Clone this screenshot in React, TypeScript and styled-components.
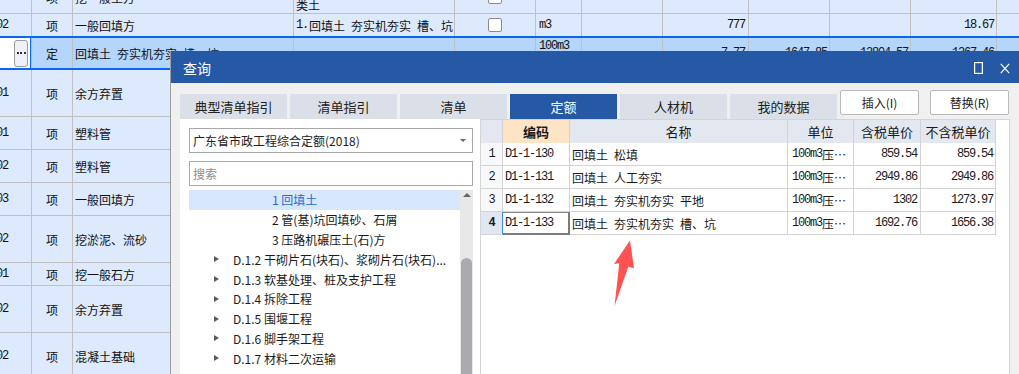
import styled, { createGlobalStyle, css } from 'styled-components';

const GlobalStyle = createGlobalStyle`
  html, body {
    margin: 0;
    padding: 0;
  }
  body {
    width: 1019px;
    height: 374px;
    overflow: hidden;
    background: #dde9fc;
    font-family: "Noto Sans CJK SC", "Noto Sans", sans-serif;
  }
`;

const Page = styled.div`
  position: relative;
  width: 1019px;
  height: 374px;
  overflow: hidden;
  background: #dde9fc;
`;

/* ---------- background sheet ---------- */

const Sheet = styled.div`
  margin-top: -19px;
`;

const SheetRow = styled.div<{ $h: number; $sel?: boolean; $noLine?: boolean }>`
  display: grid;
  grid-template-columns: 31px 40px 220px 160px 80px 45px 80px 85px 80px 80px 85px 1fr;
  column-gap: 1px;
  height: ${(p) => p.$h}px;
  background: #c0c0c0;
  border-bottom: 1px solid #c0c0c0;
  ${(p) => p.$noLine && css`border-bottom: none;`}
  ${(p) =>
    p.$sel &&
    css`
      border-top: 2px solid #0a66f5;
      border-bottom: 2px solid #0a66f5;
    `}
`;

const SCell = styled.div<{
  $align?: 'left' | 'center' | 'right';
  $top?: boolean;
  $sel?: boolean;
  $white?: boolean;
}>`
  display: flex;
  align-items: ${(p) => (p.$top ? 'flex-start' : 'center')};
  justify-content: ${(p) =>
    p.$align === 'center' ? 'center' : p.$align === 'right' ? 'flex-end' : 'flex-start'};
  padding: 0 2px;
  background: ${(p) => (p.$white ? '#ffffff' : p.$sel ? '#b4d5fc' : '#dde9fc')};
  color: #111;
  font-size: 12px;
  white-space: pre;
  overflow: hidden;
`;

const CodeTail = styled(SCell)`
  justify-content: flex-end;
  padding-right: 23px;
`;

const Multi = styled.div`
  padding-top: 1px;
  line-height: 15px;
  white-space: pre;
`;

const Mono = styled.span<{ $bold?: boolean; $gapAfter?: number }>`
  font-family: "Liberation Mono", "Noto Sans CJK SC", monospace;
  font-size: 12px;
  letter-spacing: -1.2px;
  font-weight: ${(p) => (p.$bold ? 700 : 400)};
  margin-right: ${(p) => p.$gapAfter ?? 0}px;
`;

const CheckBox = styled.div`
  width: 14px;
  height: 14px;
  box-sizing: border-box;
  border: 1px solid #8c8c8c;
  border-radius: 2px;
  background: #fff;
`;

const EditCell = styled(SCell)`
  justify-content: flex-end;
  padding: 0 3px 0 0;
  box-shadow: inset -1px 0 0 #0a66f5;
`;

const EllipsisButton = styled.div`
  width: 14px;
  height: 27px;
  box-sizing: border-box;
  border: 1px solid #9a9a9a;
  border-radius: 3px;
  background: #eef1f8;
  display: flex;
  align-items: center;
  justify-content: center;
  gap: 1.5px;
`;

const Dot = styled.span`
  width: 2px;
  height: 2px;
  background: #333;
`;

/* ---------- dialog ---------- */

const Dialog = styled.div`
  position: absolute;
  left: 170px;
  top: 51px;
  width: 849px;
  height: 330px;
  box-sizing: border-box;
  border-left: 1px solid #9c9c9c;
  background: #f0f0f0;
  display: flex;
  flex-direction: column;
`;

const TitleBar = styled.div`
  height: 32px;
  flex: none;
  display: flex;
  align-items: center;
  padding: 2px 9px 0 12px;
  box-sizing: border-box;
  background: #2559a5;
  color: #fff;
  font-size: 14px;
`;

const WinButtons = styled.div`
  margin-left: auto;
  display: flex;
  align-items: center;
  gap: 17px;
`;

const Body = styled.div`
  flex: 1;
  min-height: 0;
  display: flex;
  flex-direction: column;
  padding: 7px 0 0 9px;
`;

const TabBar = styled.div`
  height: 29px;
  flex: none;
  display: flex;
  gap: 3px;
`;

const Tab = styled.div<{ $active?: boolean }>`
  align-self: flex-end;
  width: 107px;
  height: 25px;
  display: flex;
  align-items: center;
  justify-content: center;
  font-size: 13px;
  background: ${(p) => (p.$active ? '#2559a5' : '#dadfe8')};
  color: ${(p) => (p.$active ? '#ffffff' : '#222222')};
`;

const ActionButton = styled.div<{ $gap?: number }>`
  align-self: flex-start;
  width: 79px;
  height: 25px;
  box-sizing: border-box;
  margin-left: ${(p) => p.$gap ?? 0}px;
  border: 1px solid #b9b9b9;
  border-radius: 2px;
  background: #fff;
  color: #222;
  font-size: 12px;
  display: flex;
  align-items: center;
  justify-content: center;
`;

const Content = styled.div`
  flex: 1;
  min-height: 0;
  display: flex;
`;

const LeftPanel = styled.div`
  width: 300px;
  flex: none;
  box-sizing: border-box;
  padding: 9px 7px 0 9px;
  background: #fff;
  display: flex;
  flex-direction: column;
`;

const InputBox = styled.div<{ $muted?: boolean; $mt?: number }>`
  height: 25px;
  flex: none;
  box-sizing: border-box;
  margin-top: ${(p) => p.$mt ?? 0}px;
  padding: 0 3px;
  border: 1px solid #a8a8a8;
  display: flex;
  align-items: center;
  font-size: 12px;
  color: ${(p) => (p.$muted ? '#8c8c8c' : '#222')};
`;

const DropArrow = styled.span`
  margin-left: auto;
  margin-right: 3px;
  width: 0;
  height: 0;
  border-left: 3px solid transparent;
  border-right: 3px solid transparent;
  border-top: 3px solid #666;
`;

const TreeWrap = styled.div`
  flex: 1;
  min-height: 0;
  margin-top: 4px;
  display: flex;
`;

const TreeList = styled.div`
  flex: 1;
  min-width: 0;
`;

const TreeItem = styled.div<{ $level: number; $active?: boolean }>`
  height: 19.8px;
  display: flex;
  align-items: center;
  padding-left: ${(p) => (p.$level === 2 ? 83 : 25)}px;
  background: ${(p) => (p.$active ? '#d7e7fc' : 'transparent')};
  color: ${(p) => (p.$active ? '#1f6fd8' : '#1a1a1a')};
  font-size: 12px;
  white-space: pre;
  overflow: hidden;
`;

const Caret = styled.span`
  flex: none;
  width: 0;
  height: 0;
  margin-right: 14px;
  border-top: 3.5px solid transparent;
  border-bottom: 3.5px solid transparent;
  border-left: 5px solid #5a5a5a;
`;

const ScrollTrack = styled.div`
  width: 13px;
  flex: none;
  background: #e8e8e8;
  display: flex;
  flex-direction: column;
  align-items: center;
`;

const ScrollUp = styled.span`
  margin-top: 3px;
  width: 0;
  height: 0;
  border-left: 4px solid transparent;
  border-right: 4px solid transparent;
  border-bottom: 4px solid #666;
`;

const ScrollThumb = styled.div`
  margin-top: 61px;
  width: 11px;
  flex: 1;
  border-radius: 6px 6px 0 0;
  background: #a9abae;
`;

const RightPanel = styled.div`
  width: 530px;
  flex: none;
  box-sizing: border-box;
  border: 1px solid #d4d4d4;
  border-bottom: none;
  background: #fff;
`;

const Table = styled.div`
  display: grid;
  grid-template-columns: 22px 67px 218px 66px 67px 75px;
  grid-auto-rows: 23px;
  width: fit-content;
`;

const TCell = styled.div<{
  $head?: boolean;
  $align?: 'left' | 'center' | 'right';
  $bg?: string;
  $current?: boolean;
  $pad?: number;
}>`
  box-sizing: border-box;
  display: flex;
  align-items: center;
  justify-content: ${(p) =>
    p.$align === 'center' ? 'center' : p.$align === 'right' ? 'flex-end' : 'flex-start'};
  padding: 0 ${(p) => p.$pad ?? 2}px;
  border-right: 1px solid #d3d3d3;
  border-bottom: 1px solid #d3d3d3;
  background: ${(p) => p.$bg ?? (p.$head ? '#e3e8f0' : '#ffffff')};
  color: #1a1a1a;
  font-size: ${(p) => (p.$head ? 13 : 12)}px;
  white-space: pre;
  overflow: hidden;
  ${(p) => p.$head && css`height: 24px;`}
  ${(p) =>
    p.$current &&
    css`
      border-right: 2px solid #7c7c7c;
      border-bottom: 2px solid #7c7c7c;
      box-shadow: inset 0 1px 0 #8a8a8a;
    `}
`;

const RowNum = styled(TCell)<{ $on?: boolean }>`
  justify-content: center;
  background: ${(p) => (p.$on ? '#e1e7f0' : '#f7f8fa')};
  ${(p) => p.$on && css`border-right-color: #3a8ce8;`}
`;

const Arrow = styled.svg`
  position: absolute;
  left: 610px;
  top: 236px;
`;

const lowerRows = [
  { code: '040103002001', name: '余方弃置', h: 46 },
  { code: '040801004001', name: '塑料管', h: 32 },
  { code: '040801004002', name: '塑料管', h: 32 },
  { code: '040103001003', name: '一般回填方', h: 32 },
  { code: '040101005002', name: '挖淤泥、流砂', h: 46 },
  { code: '040102001001', name: '挖一般石方', h: 22 },
  { code: '040103002002', name: '余方弃置', h: 46 },
  { code: '040601001002', name: '混凝土基础', h: 46 },
];

const tabs = ['典型清单指引', '清单指引', '清单', '定额', '人材机', '我的数据'];

const tree: { level: number; text: string; active?: boolean }[] = [
  { level: 2, text: '1 回填土', active: true },
  { level: 2, text: '2 管(基)坑回填砂、石屑' },
  { level: 2, text: '3 压路机碾压土(石)方' },
  { level: 1, text: 'D.1.2 干砌片石(块石)、浆砌片石(块石)...' },
  { level: 1, text: 'D.1.3 软基处理、桩及支护工程' },
  { level: 1, text: 'D.1.4 拆除工程' },
  { level: 1, text: 'D.1.5 围堰工程' },
  { level: 1, text: 'D.1.6 脚手架工程' },
  { level: 1, text: 'D.1.7 材料二次运输' },
];

const quotas = [
  { code: 'D1-1-130', name: '回填土\u2002松填', tax: '859.54', net: '859.54' },
  { code: 'D1-1-131', name: '回填土\u2002人工夯实', tax: '2949.86', net: '2949.86' },
  { code: 'D1-1-132', name: '回填土\u2002夯实机夯实\u2002平地', tax: '1302', net: '1273.97' },
  { code: 'D1-1-133', name: '回填土\u2002夯实机夯实\u2002槽、坑', tax: '1692.76', net: '1656.38' },
];

const Empty = ({ n }: { n: number }) => (
  <>
    {Array.from({ length: n }).map((_, i) => (
      <SCell key={i} />
    ))}
  </>
);

const App = () => {
  return (
    <Page>
      <GlobalStyle />
      <Sheet>
        <SheetRow $h={32}>
          <SCell />
          <SCell $align="center">项</SCell>
          <SCell>挖一般土方</SCell>
          <SCell $top>
            <Multi>{'1.土壤类别:一、二、三\n类土'}</Multi>
          </SCell>
          <SCell $align="center">
            <CheckBox />
          </SCell>
          <Empty n={7} />
        </SheetRow>
        <SheetRow $h={22} $noLine>
          <CodeTail>
            <Mono>040103001002</Mono>
          </CodeTail>
          <SCell $align="center">项</SCell>
          <SCell>一般回填方</SCell>
          <SCell>
            <Mono $gapAfter={1}>1.</Mono>回填土{'\u2002'}夯实机夯实{'\u2002'}槽、坑
          </SCell>
          <SCell $align="center">
            <CheckBox />
          </SCell>
          <SCell $align="left" style={{ paddingLeft: 3 }}>
            <Mono>m3</Mono>
          </SCell>
          <SCell />
          <SCell $align="right" style={{ paddingRight: 3 }}>
            <Mono>777</Mono>
          </SCell>
          <SCell />
          <SCell />
          <SCell $align="right">
            <Mono>18.67</Mono>
          </SCell>
          <SCell />
        </SheetRow>
        <SheetRow $h={30} $sel>
          <EditCell $white>
            <EllipsisButton>
              <Dot />
              <Dot />
              <Dot />
            </EllipsisButton>
          </EditCell>
          <SCell $sel $align="center">定</SCell>
          <SCell $sel>回填土{'\u2002'}夯实机夯实{'\u2002'}槽、坑</SCell>
          <SCell $sel />
          <SCell $sel />
          <SCell $sel $top style={{ paddingLeft: 3, paddingTop: 1 }}>
            <Mono>100m3</Mono>
          </SCell>
          <SCell $sel />
          <SCell $sel $align="right" style={{ paddingRight: 3 }}>
            <Mono>7.77</Mono>
          </SCell>
          <SCell $sel $align="right">
            <Mono>1647.85</Mono>
          </SCell>
          <SCell $sel $align="right">
            <Mono>12804.57</Mono>
          </SCell>
          <SCell $sel $align="right">
            <Mono>1267.46</Mono>
          </SCell>
          <SCell $sel />
        </SheetRow>
        {lowerRows.map((r, i) => (
          <SheetRow key={i} $h={r.h}>
            <CodeTail>
              <Mono>{r.code}</Mono>
            </CodeTail>
            <SCell $align="center">项</SCell>
            <SCell>{r.name}</SCell>
            <Empty n={9} />
          </SheetRow>
        ))}
      </Sheet>

      <Dialog>
        <TitleBar>
          查询
          <WinButtons>
            <svg width="9" height="12" viewBox="0 0 9 12">
              <rect x="0.6" y="0.6" width="7.8" height="10.8" fill="none" stroke="#fff" strokeWidth="1.2" />
            </svg>
            <svg width="10" height="11" viewBox="0 0 10 11">
              <path d="M0.8 0.8 L9.2 10.2 M9.2 0.8 L0.8 10.2" stroke="#fff" strokeWidth="1.2" fill="none" />
            </svg>
          </WinButtons>
        </TitleBar>
        <Body>
          <TabBar>
            {tabs.map((t) => (
              <Tab key={t} $active={t === '定额'}>
                {t}
              </Tab>
            ))}
            <ActionButton>插入(I)</ActionButton>
            <ActionButton $gap={8}>替换(R)</ActionButton>
          </TabBar>
          <Content>
            <LeftPanel>
              <InputBox>
                广东省市政工程综合定额(2018)
                <DropArrow />
              </InputBox>
              <InputBox $muted $mt={8}>
                搜索
              </InputBox>
              <TreeWrap>
                <TreeList>
                  {tree.map((n) => (
                    <TreeItem key={n.text} $level={n.level} $active={n.active}>
                      {n.level === 1 && <Caret />}
                      {n.text}
                    </TreeItem>
                  ))}
                </TreeList>
                <ScrollTrack>
                  <ScrollUp />
                  <ScrollThumb />
                </ScrollTrack>
              </TreeWrap>
            </LeftPanel>
            <RightPanel>
              <Table>
                <TCell $head />
                <TCell $head $align="center" $bg="#fde4c4" style={{ fontWeight: 700 }}>
                  编码
                </TCell>
                <TCell $head $align="center">名称</TCell>
                <TCell $head $align="center">单位</TCell>
                <TCell $head $align="center">含税单价</TCell>
                <TCell $head $align="center">不含税单价</TCell>
                {quotas.map((q, i) => {
                  const last = i === quotas.length - 1;
                  return [
                    <RowNum key={`n${i}`} $on={last}>
                      <Mono $bold={last}>{i + 1}</Mono>
                    </RowNum>,
                    <TCell key={`c${i}`} $current={last}>
                      <Mono>{q.code}</Mono>
                    </TCell>,
                    <TCell key={`m${i}`} $pad={2}>
                      {q.name}
                    </TCell>,
                    <TCell key={`u${i}`} $pad={4}>
                      <Mono>100m3</Mono>压⋯
                    </TCell>,
                    <TCell key={`t${i}`} $align="right" $pad={3}>
                      <Mono>{q.tax}</Mono>
                    </TCell>,
                    <TCell key={`p${i}`} $align="right" $pad={2}>
                      <Mono>{q.net}</Mono>
                    </TCell>,
                  ];
                })}
              </Table>
            </RightPanel>
          </Content>
        </Body>
      </Dialog>

      <Arrow width="30" height="75" viewBox="0 0 30 75">
        <polygon points="20,4.5 24,32.3 18.3,30.7 4.5,70 9.3,27.3 4,28" fill="#ff5252" />
      </Arrow>
    </Page>
  );
};

export default App;
